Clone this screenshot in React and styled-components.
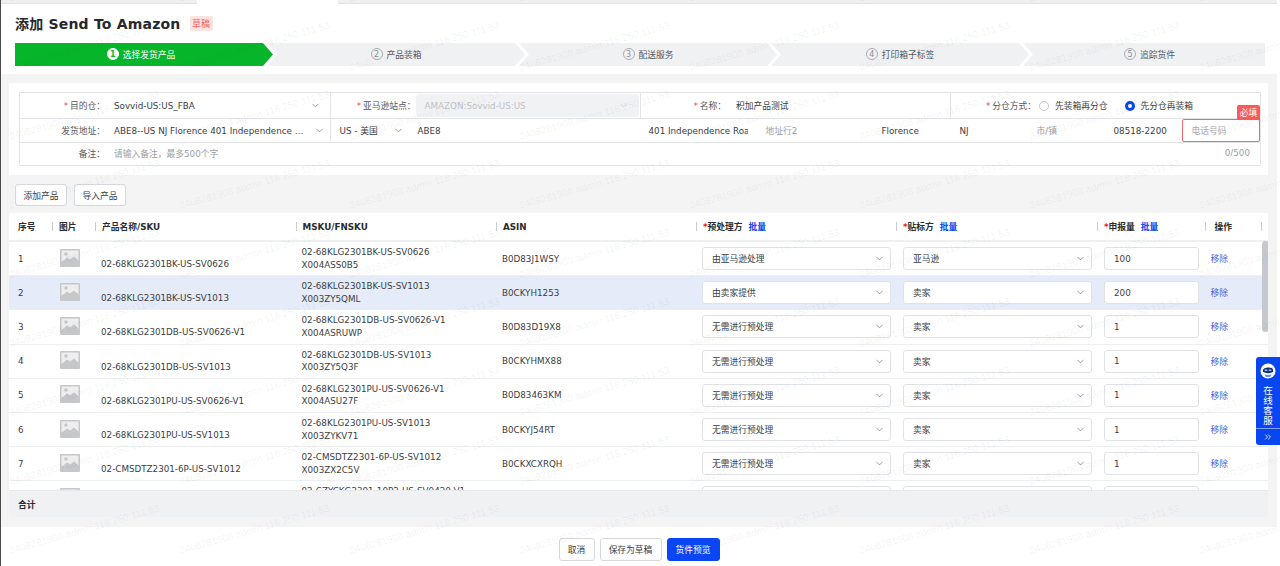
import React from "react";
import styled, { createGlobalStyle } from "styled-components";
import { ChevronDown, ChevronsRight } from "lucide-react";

const Global = createGlobalStyle`
  html, body { margin: 0; padding: 0; background: #fff; }
  body { font-family: "DejaVu Sans", "Noto Sans CJK SC", sans-serif; font-size: 8.75px; color: #3a3d42; }
  * { box-sizing: border-box; }
`;

const Page = styled.div`
  position: relative;
  width: 1280px;
  height: 566px;
  overflow: hidden;
  border-left: 1px solid #4a4a4a;
  padding-right: 3px;
  background: #fff;
  display: flex;
  flex-direction: column;
`;

const TabStrip = styled.div`
  display: flex;
  height: 4px;
  flex: none;
`;
const TabPiece = styled.div`
  width: ${(p) => p.$w}px;
  flex: ${(p) => (p.$grow ? 1 : "none")};
  background: ${(p) => (p.$active ? "#fff" : "#eef0f2")};
  border-bottom: 1px solid ${(p) => (p.$active ? "#fff" : "#dfe2e6")};
`;

const Header = styled.div`
  flex: none;
  height: 70px;
  padding: 10px 12px 0 14px;
`;
const TitleRow = styled.div`
  display: flex;
  align-items: center;
  height: 18px;
`;
const Title = styled.div`
  font-size: 14px;
  font-weight: 700;
  letter-spacing: 0.2px;
  color: #26282c;
  white-space: pre;
`;
const DraftTag = styled.span`
  margin-left: 9px;
  width: 23px;
  height: 15px;
  background: #fde3e2;
  color: #f0625f;
  font-size: 9px;
  display: flex;
  align-items: center;
  justify-content: center;
  border-radius: 2px;
`;
const Steps = styled.div`
  display: flex;
  margin-top: 11px;
  height: 23px;
`;
const Step = styled.div`
  flex: ${(p) => (p.$last ? 1 : "none")};
  width: 258px;
  margin-left: ${(p) => (p.$first ? 0 : -6)}px;
  padding-left: ${(p) => (p.$last ? 11 : 0)}px;
  padding-right: ${(p) => (p.$first ? 6 : 0)}px;
  padding-bottom: 1px;
  background: ${(p) => (p.$active ? "#07b52b" : "#f0f1f3")};
  color: ${(p) => (p.$active ? "#fff" : "#55595f")};
  display: flex;
  align-items: center;
  justify-content: center;
  gap: 4px;
  clip-path: ${(p) =>
    p.$first
      ? "polygon(0 0, calc(100% - 10px) 0, 100% 50%, calc(100% - 10px) 100%, 0 100%)"
      : p.$last
      ? "polygon(0 0, 100% 0, 100% 100%, 0 100%, 10px 50%)"
      : "polygon(0 0, calc(100% - 10px) 0, 100% 50%, calc(100% - 10px) 100%, 0 100%, 10px 50%)"};
`;
const StepNum = styled.span`
  width: 12px;
  height: 12px;
  border-radius: 50%;
  border: 1px solid ${(p) => (p.$active ? "#fff" : "#a9adb3")};
  background: ${(p) => (p.$active ? "#fff" : "transparent")};
  color: ${(p) => (p.$active ? "#07b52b" : "#8d9197")};
  font-size: 8px;
  font-weight: ${(p) => (p.$active ? 700 : 400)};
  display: flex;
  align-items: center;
  justify-content: center;
`;

const Section = styled.div`
  flex: none;
  height: 453px;
  background: #f4f4f5;
  padding: 9px 9px 0 8px;
`;
const FormCard = styled.div`
  height: 92px;
  background: #fff;
  padding: 9px 7px 0 10px;
`;
const FormTable = styled.div`
  border: 1px solid #e2e4e8;
  border-radius: 1px;
  height: 74px;
  display: flex;
  flex-direction: column;
`;
const FormRow = styled.div`
  display: grid;
  grid-template-columns: ${(p) => p.$cols};
  height: ${(p) => p.$h}px;
  flex: ${(p) => (p.$grow ? 1 : "none")};
  padding-bottom: ${(p) => p.$nudge ?? 0}px;
  border-bottom: ${(p) => (p.$last ? "none" : "1px solid #e2e4e8")};
`;
const Cell = styled.div`
  display: flex;
  align-items: center;
  min-width: 0;
  position: relative;
  border-right: ${(p) => (p.$divider ? "1px solid #e2e4e8" : "none")};
`;
const Label = styled.div`
  width: 85px;
  flex: none;
  text-align: right;
  color: #55595f;
  white-space: nowrap;
`;
const Star = styled.span`
  color: #f0484a;
  margin-right: 2px;
`;
const Value = styled.div`
  flex: 1;
  min-width: 0;
  padding-left: ${(p) => p.$pad ?? 9}px;
  padding-right: ${(p) => p.$padR ?? 0}px;
  color: #3a3d42;
  white-space: nowrap;
  overflow: hidden;
  text-overflow: ellipsis;
`;
const Muted = styled(Value)`
  color: #9a9ea4;
`;
const Chevron = styled(ChevronDown)`
  flex: none;
  color: ${(p) => p.$tone ?? "#6a6e74"};
  margin-right: ${(p) => p.$mr ?? 8}px;
`;
const DisabledSelect = styled.div`
  width: 223px;
  height: 23px;
  background: #f1f2f4;
  border-radius: 3px;
  display: flex;
  align-items: center;
  padding-left: 9px;
  color: #c0c3c8;
  justify-content: space-between;
`;
const RadioGroup = styled.div`
  display: flex;
  align-items: center;
  padding-left: 3px;
`;
const Radio = styled.span`
  width: 10px;
  height: 10px;
  border-radius: 50%;
  margin-left: ${(p) => p.$ml ?? 0}px;
  margin-right: 6px;
  flex: none;
  border: ${(p) => (p.$on ? "3px solid #0a46f0" : "1px solid #c6c9ce")};
  background: #fff;
`;
const AddressText = styled.div`
  padding-left: 8px;
  margin-right: 10px;
  flex: 1;
  white-space: nowrap;
  overflow: hidden;
  color: ${(p) => (p.$ph ? "#9a9ea4" : "#3a3d42")};
`;
const PhoneBox = styled.div`
  width: 100%;
  height: 23px;
  border: 1px solid #f0686a;
  border-radius: 2px;
  display: flex;
  align-items: center;
  padding-left: 9px;
  color: #a6a9ae;
`;
const RequiredBadge = styled.div`
  position: absolute;
  right: 0;
  top: -14px;
  width: 23px;
  height: 15px;
  background: #fb5a5c;
  color: #fff;
  display: flex;
  align-items: center;
  justify-content: center;
  border-radius: 2px 2px 0 0;
`;
const Count = styled.div`
  color: #9a9ea4;
  margin-right: 10px;
`;

const ActionRow = styled.div`
  display: flex;
  gap: 7px;
  margin: 9px 0 7px 6px;
`;
const Btn = styled.button`
  font: inherit;
  height: ${(p) => p.$h ?? 22}px;
  width: ${(p) => p.$w}px;
  padding: 0;
  background: ${(p) => (p.$primary ? "#0a46f5" : "#fff")};
  color: ${(p) => (p.$primary ? "#fff" : "#3a3d42")};
  border: 1px solid ${(p) => (p.$primary ? "#0a46f5" : "#d4d7dc")};
  border-radius: 3px;
`;

const COLS = "43px 43px 200.5px 200.5px 200px 200px 201px 107.5px 56.5px 1fr";
const TableCard = styled.div`
  position: relative;
  height: 304px;
  background: #fff;
  display: flex;
  flex-direction: column;
  overflow: hidden;
  border-radius: 2px;
`;
const HeadRow = styled.div`
  flex: none;
  height: 29px;
  display: grid;
  grid-template-columns: ${COLS};
  align-items: center;
  border-bottom: 2px solid #eef0f2;
  font-weight: 700;
  color: #2a2c30;
`;
const HeadCell = styled.div`
  display: flex;
  align-items: center;
  height: 9px;
  padding-left: ${(p) => p.$pad ?? 6}px;
  border-left: ${(p) => (p.$first ? "none" : "1px solid #c9ccd1")};
  white-space: nowrap;
`;
const ReqMark = styled.span`
  color: #e8202a;
`;
const BatchLink = styled.span`
  color: #0a46f0;
  margin-left: 6px;
`;
const Body = styled.div`
  flex: 1;
  min-height: 0;
  overflow: hidden;
`;
const Row = styled.div`
  height: 34.2px;
  display: grid;
  grid-template-columns: ${COLS};
  align-items: center;
  background: ${(p) => (p.$hl ? "#e5ebf8" : "#fff")};
  border-bottom: 1px solid #eceef0;
`;
const TextCell = styled.div`
  padding-left: ${(p) => p.$pad ?? 6}px;
  color: #3a3d42;
  white-space: nowrap;
`;
const SkuCell = styled(TextCell)`
  padding-top: 11px;
`;
const TwoLine = styled(TextCell)`
  line-height: 12.5px;
`;
const ThumbCell = styled.div`
  padding-left: 8px;
  display: flex;
  margin-top: -2px;
`;
const SelectBox = styled.div`
  height: 23px;
  width: ${(p) => p.$w}px;
  margin-left: ${(p) => p.$ml}px;
  background: #fff;
  border: 1px solid #e0e2e6;
  border-radius: 3px;
  display: flex;
  align-items: center;
  justify-content: space-between;
  padding-left: 9px;
`;
const QtyBox = styled.div`
  height: 23px;
  width: 95px;
  margin-left: 7px;
  background: #fff;
  border: 1px solid #e0e2e6;
  border-radius: 3px;
  display: flex;
  align-items: center;
  padding-left: 9px;
`;
const RemoveLink = styled.span`
  padding-left: 6px;
  color: #3a5fe6;
`;
const Scrollbar = styled.div`
  position: absolute;
  left: 1253px;
  top: 28px;
  width: 7px;
  height: 91px;
  background: #c5c9cf;
  border-radius: 4px;
`;
const TotalBar = styled.div`
  flex: none;
  height: 27px;
  background: #f0f1f3;
  border-top: 1px solid #e6e8eb;
  display: flex;
  align-items: center;
  padding-left: 9px;
  font-weight: 700;
  color: #2a2c30;
`;

const FooterBar = styled.div`
  flex: 1;
  display: flex;
  align-items: flex-start;
  justify-content: center;
  gap: 5px;
  padding-top: 11px;
`;

const Service = styled.div`
  position: absolute;
  right: 0;
  top: 357px;
  width: 24px;
  height: 88px;
  background: #0a46f0;
  border-radius: 3px 0 0 3px;
  color: #fff;
  display: flex;
  flex-direction: column;
  align-items: center;
  padding-top: 6px;
`;
const ServiceText = styled.div`
  width: 10px;
  font-size: 9.5px;
  line-height: 10px;
  margin-top: 6px;
  text-align: center;
  height: 41px;
`;
const ServiceToggle = styled.div`
  margin-top: auto;
  width: 100%;
  height: 17px;
  border-top: 1px solid #7f9ff5;
  display: flex;
  align-items: center;
  justify-content: center;
`;

const Watermarks = styled.div`
  position: absolute;
  left: 10px;
  top: -65px;
  display: grid;
  grid-template-columns: repeat(8, 170px);
  grid-auto-rows: 69px;
  pointer-events: none;
  z-index: 5;
`;
const Mark = styled.div`
  align-self: end;
  font-family: "Liberation Sans", sans-serif;
  font-size: 10px;
  line-height: 10px;
  white-space: nowrap;
  color: rgba(60, 70, 80, 0.08);
  transform: rotate(-16deg);
  transform-origin: 0 100%;
`;

const Thumb = () => (
  <svg width="20" height="18" viewBox="0 0 20 18">
    <rect width="20" height="18" rx="1" fill="#c6c7c9" />
    <rect x="1.5" y="1.5" width="17" height="11" fill="#eeeeef" />
    <circle cx="6" cy="5" r="1.8" fill="#c6c7c9" />
    <path d="M1.5 13 L7 8.5 L10 10.5 L14 7.5 L18.5 11.5 L18.5 14 L1.5 14 Z" fill="#c6c7c9" />
  </svg>
);

const Avatar = () => (
  <svg width="16" height="17" viewBox="0 0 16 17">
    <circle cx="8" cy="8" r="7.5" fill="#fff" />
    <path d="M3 7 C3 3.5 13 3.5 13 7 L13 9 C10 10.5 6 10.5 3 9 Z" fill="#0f2f7a" />
    <path d="M4.5 11 C6.5 12.4 9.5 12.4 11.5 11 L10.5 13.5 C9 14.3 7 14.3 5.5 13.5 Z" fill="#5f8df5" />
    <rect x="4.5" y="6.5" width="3" height="1.6" rx="0.8" fill="#9fc4ff" />
    <rect x="8.5" y="6.5" width="3" height="1.6" rx="0.8" fill="#9fc4ff" />
  </svg>
);

const stepData = ["选择发货产品", "产品装箱", "配送服务", "打印箱子标签", "追踪货件"];

const rows = [
  ["02-68KLG2301BK-US-SV0626", "02-68KLG2301BK-US-SV0626", "X004ASS0B5", "B0D83J1WSY", "由亚马逊处理", "亚马逊", "100"],
  ["02-68KLG2301BK-US-SV1013", "02-68KLG2301BK-US-SV1013", "X003ZY5QML", "B0CKYH1253", "由卖家提供", "卖家", "200"],
  ["02-68KLG2301DB-US-SV0626-V1", "02-68KLG2301DB-US-SV0626-V1", "X004ASRUWP", "B0D83D19X8", "无需进行预处理", "卖家", "1"],
  ["02-68KLG2301DB-US-SV1013", "02-68KLG2301DB-US-SV1013", "X003ZY5Q3F", "B0CKYHMX88", "无需进行预处理", "卖家", "1"],
  ["02-68KLG2301PU-US-SV0626-V1", "02-68KLG2301PU-US-SV0626-V1", "X004ASU27F", "B0D83463KM", "无需进行预处理", "卖家", "1"],
  ["02-68KLG2301PU-US-SV1013", "02-68KLG2301PU-US-SV1013", "X003ZYKV71", "B0CKYJ54RT", "无需进行预处理", "卖家", "1"],
  ["02-CMSDTZ2301-6P-US-SV1012", "02-CMSDTZ2301-6P-US-SV1012", "X003ZX2C5V", "B0CKXCXRQH", "无需进行预处理", "卖家", "1"],
  ["02-CZYCKG2301-10P2-US-SV0420-V1", "02-CZYCKG2301-10P2-US-SV0420-V1", "X004ASV2C1", "B0D83F2KLM", "无需进行预处理", "卖家", "1"],
];

export default function App() {
  return (
    <Page>
      <Global />
      <TabStrip>
        <TabPiece $w={196} />
        <TabPiece $w={141} $active />
        <TabPiece $grow />
      </TabStrip>
      <Header>
        <TitleRow>
          <Title>添加 Send To Amazon</Title>
          <DraftTag>草稿</DraftTag>
        </TitleRow>
        <Steps>
          {stepData.map((s, i) => (
            <Step key={s} $active={i === 0} $first={i === 0} $last={i === 4}>
              <StepNum $active={i === 0}>{i + 1}</StepNum>
              {s}
            </Step>
          ))}
        </Steps>
      </Header>
      <Section>
        <FormCard>
          <FormTable>
            <FormRow $cols="310.5px 310.5px 310px 1fr" $h={26}>
              <Cell $divider>
                <Label><Star>*</Star>目的仓：</Label>
                <Value>Sovvid-US:US_FBA</Value>
                <Chevron size={11} strokeWidth={1.5} $mr={9} />
              </Cell>
              <Cell $divider>
                <Label><Star>*</Star>亚马逊站点：</Label>
                <DisabledSelect>
                  AMAZON:Sovvid-US:US
                  <Chevron size={11} strokeWidth={1.5} $tone="#c0c3c8" $mr={10} />
                </DisabledSelect>
              </Cell>
              <Cell $divider>
                <Label><Star>*</Star>名称：</Label>
                <Value $pad={10}>积加产品测试</Value>
              </Cell>
              <Cell>
                <Label><Star>*</Star>分仓方式：</Label>
                <RadioGroup>
                  <Radio />先装箱再分仓
                  <Radio $on $ml={17} />先分仓再装箱
                </RadioGroup>
              </Cell>
            </FormRow>
            <FormRow $cols="310.5px 79px 231px 117px 116px 78px 77px 77px 76px 1fr" $h={24} $nudge={1}>
              <Cell $divider>
                <Label>发货地址：</Label>
                <Value $padR={8}>ABE8--US NJ Florence 401 Independence Road</Value>
                <Chevron size={11} strokeWidth={1.5} $mr={5} />
              </Cell>
              <Cell>
                <Value $pad={9}>US - 美国</Value>
                <Chevron size={11} strokeWidth={1.5} $mr={6} />
              </Cell>
              <Cell><AddressText>ABE8</AddressText></Cell>
              <Cell><AddressText>401 Independence Road</AddressText></Cell>
              <Cell><AddressText $ph>地址行2</AddressText></Cell>
              <Cell><AddressText>Florence</AddressText></Cell>
              <Cell><AddressText>NJ</AddressText></Cell>
              <Cell><AddressText $ph>市/镇</AddressText></Cell>
              <Cell><AddressText>08518-2200</AddressText></Cell>
              <Cell>
                <RequiredBadge>必填</RequiredBadge>
                <PhoneBox>电话号码</PhoneBox>
              </Cell>
            </FormRow>
            <FormRow $cols="1fr auto" $grow $last $nudge={2}>
              <Cell>
                <Label>备注：</Label>
                <Muted>请输入备注，最多500个字</Muted>
              </Cell>
              <Cell><Count>0/500</Count></Cell>
            </FormRow>
          </FormTable>
        </FormCard>
        <ActionRow>
          <Btn $w={52}>添加产品</Btn>
          <Btn $w={52}>导入产品</Btn>
        </ActionRow>
        <TableCard>
          <HeadRow>
            <HeadCell $first $pad={9}>序号</HeadCell>
            <HeadCell>图片</HeadCell>
            <HeadCell>产品名称/SKU</HeadCell>
            <HeadCell>MSKU/FNSKU</HeadCell>
            <HeadCell>ASIN</HeadCell>
            <HeadCell><ReqMark>*</ReqMark>预处理方<BatchLink>批量</BatchLink></HeadCell>
            <HeadCell><ReqMark>*</ReqMark>贴标方<BatchLink>批量</BatchLink></HeadCell>
            <HeadCell><ReqMark>*</ReqMark>申报量<BatchLink>批量</BatchLink></HeadCell>
            <HeadCell $pad={9}>操作</HeadCell>
            <HeadCell />
          </HeadRow>
          <Body>
            {rows.map((r, i) => (
              <Row key={r[0]} $hl={i === 1}>
                <TextCell $pad={9}>{i + 1}</TextCell>
                <ThumbCell><Thumb /></ThumbCell>
                <SkuCell>{r[0]}</SkuCell>
                <TwoLine>{r[1]}<br />{r[2]}</TwoLine>
                <TextCell>{r[3]}</TextCell>
                <SelectBox $w={189} $ml={6}>{r[4]}<Chevron size={11} strokeWidth={1.5} $mr={5} /></SelectBox>
                <SelectBox $w={189} $ml={7}>{r[5]}<Chevron size={11} strokeWidth={1.5} $mr={5} /></SelectBox>
                <QtyBox>{r[6]}</QtyBox>
                <RemoveLink>移除</RemoveLink>
              </Row>
            ))}
          </Body>
          <TotalBar>合计</TotalBar>
          <Scrollbar />
        </TableCard>
      </Section>
      <FooterBar>
        <Btn $w={36} $h={23}>取消</Btn>
        <Btn $w={62} $h={23}>保存为草稿</Btn>
        <Btn $w={53} $h={23} $primary>货件预览</Btn>
      </FooterBar>
      <Service>
        <Avatar />
        <ServiceText>在线客服</ServiceText>
        <ServiceToggle><ChevronsRight size={10} strokeWidth={2} /></ServiceToggle>
      </Service>
      <Watermarks>
        {Array.from({ length: 72 }).map((_, i) => (
          <Mark key={i}>2408281908 admin 118.250.111.53</Mark>
        ))}
      </Watermarks>
    </Page>
  );
}
